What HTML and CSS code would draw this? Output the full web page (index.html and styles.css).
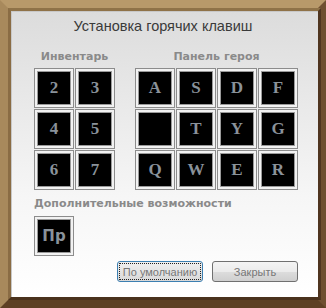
FILE: index.html
```html
<!DOCTYPE html>
<html lang="ru">
<head>
  <meta charset="UTF-8" />
  <title>Установка горячих клавиш</title>
  <link rel="stylesheet" href="styles.css">
</head>
<body>
  <div class="frame">
    <div class="panel">
      <div class="title">Установка горячих клавиш</div>

      <!-- ===== keys ===== -->
      <div class="groups">
        <div class="group">
          <div class="label">Инвентарь</div>
          <div class="grid grid-inv">
            <div class="key"><span>2</span></div>
            <div class="key"><span>3</span></div>
            <div class="key"><span>4</span></div>
            <div class="key"><span>5</span></div>
            <div class="key"><span>6</span></div>
            <div class="key"><span>7</span></div>
          </div>
        </div>
        <div class="group">
          <div class="label">Панель героя</div>
          <div class="grid grid-hero">
            <div class="key"><span>A</span></div>
            <div class="key"><span>S</span></div>
            <div class="key"><span>D</span></div>
            <div class="key"><span>F</span></div>
            <div class="key"><span></span></div>
            <div class="key"><span>T</span></div>
            <div class="key"><span>Y</span></div>
            <div class="key"><span>G</span></div>
            <div class="key"><span>Q</span></div>
            <div class="key"><span>W</span></div>
            <div class="key"><span>E</span></div>
            <div class="key"><span>R</span></div>
          </div>
        </div>
      </div>

      <div class="label label-extra">Дополнительные возможности</div>
      <div class="grid grid-extra">
        <div class="key"><span class="sans">Пр</span></div>
      </div>

      <!-- ===== buttons ===== -->
      <div class="buttons">
        <button class="btn btn-focus">По умолчанию</button>
        <button class="btn">Закрыть</button>
      </div>
    </div>
  </div>
</body>
</html>
```

FILE: styles.css
```css
body {
  margin: 0;
  background: #fff;
  font-family: 'DejaVu Sans', sans-serif;
}

.frame {
  width: 326px;
  height: 308px;
  box-sizing: border-box;
  border: 8px solid;
  border-color: #b8996a #6f4f30 #5e4024 #a8895c;
  display: flex;
}

.panel {
  flex: 1;
  border: 3px solid;
  border-color: #8f7248 #4f3520 #4a321d #8a6c44;
  background: linear-gradient(to bottom, #dcdcdc 0%, #e8e8e8 30%, #f6f6f6 65%, #fff 100%);
  box-shadow: inset 1px 1px 0 #c8c8c8;
  padding: 6px 20px 0 23px;
  display: flex;
  flex-direction: column;
}

.title {
  text-align: center;
  font-family: 'Liberation Sans', sans-serif;
  font-size: 14.5px;
  line-height: 18px;
  color: #3a3a3a;
  margin-left: -6px;
}

.groups {
  display: flex;
  gap: 20px;
  margin-top: 15px;
}

.group {
  display: flex;
  flex-direction: column;
}

.label {
  text-align: center;
  font-size: 11px;
  font-weight: bold;
  line-height: 13px;
  color: #8a8a8a;
  margin-bottom: 5px;
}

.label-extra {
  text-align: left;
  margin-top: 7px;
  margin-bottom: 6px;
}

.grid {
  display: grid;
  grid-template-columns: repeat(2, 40px);
  grid-auto-rows: 40px;
  gap: 1px;
}
.grid-hero {
  grid-template-columns: repeat(4, 40px);
}
.grid-extra {
  grid-template-columns: 40px;
}

.key {
  box-sizing: border-box;
  border: 1px solid #8c8c8c;
  padding: 2px;
  background: #f2f2f2;
  display: flex;
}
.key span {
  flex: 1;
  background: #000;
  border: 1px solid #9a9a9a;
  display: flex;
  align-items: center;
  justify-content: center;
  font-family: 'Liberation Serif', serif;
  font-weight: bold;
  font-size: 17px;
  color: #8a929a;
}
.key span.sans {
  font-family: 'DejaVu Sans', sans-serif;
  font-size: 15px;
}

.buttons {
  display: flex;
  justify-content: flex-end;
  gap: 9px;
  margin-top: 5px;
}

.btn {
  width: 86px;
  height: 21px;
  padding: 0;
  border: 1px solid #707070;
  border-radius: 3px;
  background: linear-gradient(to bottom, #f4f4f4 0%, #ebebeb 50%, #dddddd 51%, #cfcfcf 100%);
  font-family: 'Liberation Sans', sans-serif;
  font-size: 11px;
  color: #777;
}
.btn-focus {
  border-color: #3c7fb1;
  outline: 1px dotted #222;
  outline-offset: -3px;
  background: linear-gradient(to bottom, #f0f0f0 0%, #e4e4e4 50%, #d8d8d8 100%);
}
```
